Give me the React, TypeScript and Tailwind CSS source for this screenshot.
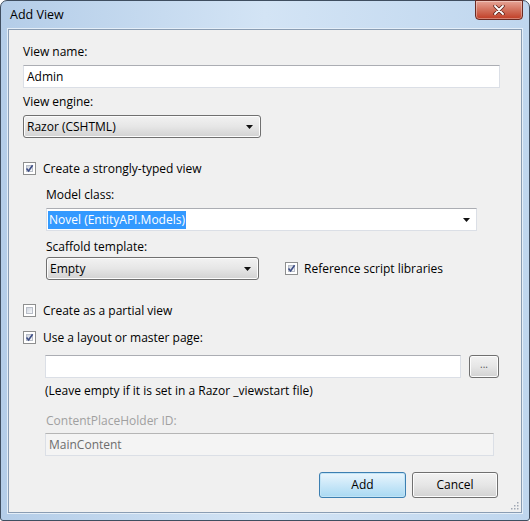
const font = { fontFamily: '"Open Sans", "Noto Sans", sans-serif' };

function Check({ checked }: { checked: boolean }) {
  return (
    <span className="relative inline-flex h-[13px] w-[13px] shrink-0 items-center justify-center border border-[#8e8f8f] bg-white">
      <span className="absolute inset-[2px] border border-[#b9bec8] bg-gradient-to-br from-[#cfd5df] to-[#f7f8fa]" />
      {checked && (
        <svg viewBox="0 0 9 9" className="relative h-[9px] w-[9px]">
          <path d="M1.5 4.5 L3.6 7 L7.6 1.2" fill="none" stroke="#3e4e86" strokeWidth="1.6" />
        </svg>
      )}
    </span>
  );
}

function Arrow() {
  return (
    <svg viewBox="0 0 7 4" className="h-[4px] w-[7px]">
      <path d="M0 0 H7 L3.5 4 Z" fill="#111" />
    </svg>
  );
}

function DropButton({ label, className }: { label: string; className: string }) {
  return (
    <div
      className={`flex h-[23px] items-center justify-between rounded-[3px] border border-[#707070] bg-gradient-to-b from-[#f2f2f2] via-[#e6e6e6] to-[#d2d2d2] pl-[3px] pr-[7px] text-[12px] text-black shadow-[inset_0_0_0_1px_#fcfcfc] ${className}`}
    >
      <span>{label}</span>
      <Arrow />
    </div>
  );
}

function TextBox({ value, className, disabled }: { value?: string; className: string; disabled?: boolean }) {
  return (
    <div
      className={`flex h-[23px] items-center border border-[#dbdfe6] border-t-[#abadb3] px-[3px] text-[12px] ${
        disabled ? "bg-[#f4f4f4] text-[#6d6d6d] border-[#c9c9c9] border-t-[#b5b5b5]" : "bg-white text-black"
      } ${className}`}
    >
      {value}
    </div>
  );
}

export default function App() {
  return (
    <div className="h-[521px] w-[530px] bg-white" style={font}>
      <div className="relative flex h-full w-full flex-col rounded-t-[7px] rounded-b-[3px] border border-[#3f4e60] bg-gradient-to-r from-[#b4cde8] via-[#d3e4f5] to-[#bfd6ee] px-[7px] pb-[7px]">
        {/* title bar */}
        <div className="flex h-[28px] items-center pl-[2px] text-[12.5px] text-black">Add View</div>
        <div className="absolute right-[6px] top-[-1px] flex h-[20px] w-[48px] items-center justify-center rounded-b-[4px] border border-[#6b2a22] bg-gradient-to-b from-[#e6a496] via-[#d2705c] to-[#c03b23] shadow-[inset_0_0_0_1px_rgba(255,255,255,0.35)]">
          <svg viewBox="0 0 12 10" className="h-[10px] w-[12px]">
            <path d="M2 1 L10 9 M10 1 L2 9" stroke="#5a2018" strokeWidth="3.4" strokeLinecap="round" />
            <path d="M2 1 L10 9 M10 1 L2 9" stroke="#ffffff" strokeWidth="1.8" strokeLinecap="round" />
          </svg>
        </div>

        {/* client area */}
        <div className="relative flex flex-1 flex-col border border-[#8a9db3] bg-[#f0f0f0] pl-[14px] pr-[20px] text-[12px] text-black shadow-[0_0_0_1px_#e4eef8]">
          <div className="mt-[14px] h-[15px] leading-[15px]">View name:</div>
          <TextBox value="Admin" className="mt-[6px] w-[477px]" />
          <div className="mt-[6px] h-[15px] leading-[15px]">View engine:</div>
          <DropButton label="Razor (CSHTML)" className="mt-[6px] w-[238px]" />

          <div className="mt-[23px] flex h-[15px] items-center gap-[6px] leading-[15px]">
            <Check checked />
            <span className="ml-[1px]">Create a strongly-typed view</span>
          </div>

          <div className="pl-[23px]">
            <div className="mt-[11px] h-[15px] leading-[15px]">Model class:</div>
            <div className="mt-[6px] flex h-[23px] w-[431px] items-center justify-between border border-[#dbdfe6] border-t-[#abadb3] bg-white pl-[1px] pr-[6px]">
              <span className="bg-[#3399ff] px-[1px] text-white">Novel (EntityAPI.Models)</span>
              <Arrow />
            </div>
            <div className="mt-[8px] h-[15px] leading-[15px]">Scaffold template:</div>
            <div className="mt-[3px] flex items-center">
              <DropButton label="Empty" className="w-[213px]" />
              <div className="ml-[26px] flex items-center gap-[6px]">
                <Check checked />
                <span>Reference script libraries</span>
              </div>
            </div>
          </div>

          <div className="mt-[23px] flex h-[15px] items-center gap-[6px] leading-[15px]">
            <Check checked={false} />
            <span className="ml-[1px]">Create as a partial view</span>
          </div>
          <div className="mt-[12px] flex h-[15px] items-center gap-[6px] leading-[15px]">
            <Check checked />
            <span className="ml-[1px]">Use a layout or master page:</span>
          </div>

          <div className="pl-[22px]">
            <div className="mt-[10px] flex items-center">
              <TextBox className="w-[416px]" />
              <div className="ml-[8px] flex h-[23px] w-[30px] items-center justify-center rounded-[3px] border border-[#707070] bg-gradient-to-b from-[#f2f2f2] via-[#e6e6e6] to-[#d2d2d2] pb-[4px] text-[10px] text-[#555] shadow-[inset_0_0_0_1px_#fcfcfc]">
                ...
              </div>
            </div>
            <div className="mt-[5px] h-[15px] leading-[15px]">(Leave empty if it is set in a Razor _viewstart file)</div>
            <div className="mt-[15px] h-[15px] pl-[1px] leading-[15px] text-[#a0a0a0]">ContentPlaceHolder ID:</div>
            <TextBox value="MainContent" disabled className="mt-[5px] w-[449px]" />
          </div>

          <div className="mt-[16px] flex justify-end gap-[6px] pr-[3px]">
            <div className="flex h-[26px] w-[87px] items-center justify-center rounded-[3px] border border-[#3c7fb1] bg-gradient-to-b from-[#eaf6fd] via-[#c9e7f8] to-[#a9d9f2] shadow-[inset_0_0_0_1px_#c2e4f6]">
              Add
            </div>
            <div className="flex h-[26px] w-[86px] items-center justify-center rounded-[3px] border border-[#707070] bg-gradient-to-b from-[#f2f2f2] via-[#e6e6e6] to-[#d2d2d2] shadow-[inset_0_0_0_1px_#fcfcfc]">
              Cancel
            </div>
          </div>

          <svg viewBox="0 0 10 10" className="absolute bottom-[2px] right-[2px] h-[10px] w-[10px]">
            {[
              [8, 2],
              [8, 5],
              [5, 5],
              [8, 8],
              [5, 8],
              [2, 8],
            ].map(([x, y], i) => (
              <rect key={i} x={x} y={y} width="1.5" height="1.5" fill="#a0a8b4" />
            ))}
          </svg>
        </div>
      </div>
    </div>
  );
}
